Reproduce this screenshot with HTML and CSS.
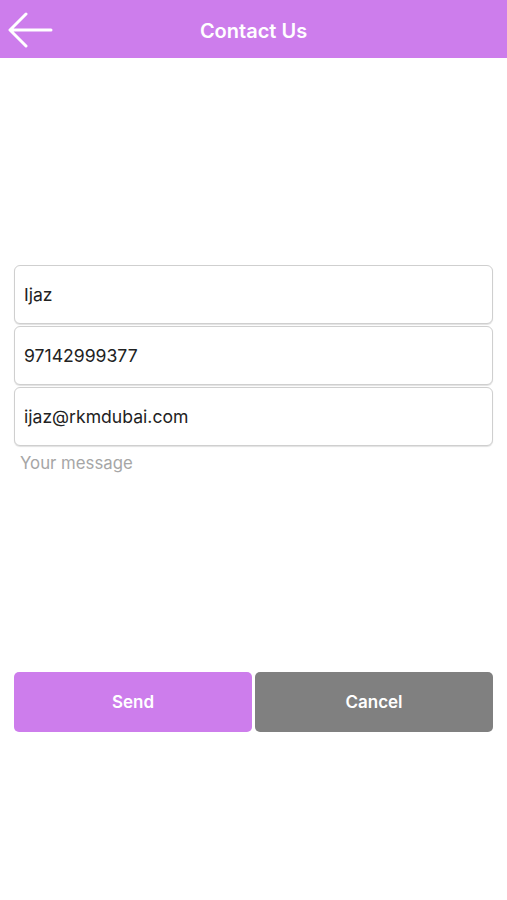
FILE: index.html
```html
<!DOCTYPE html>
<html>
<head>
    <meta charset="UTF-8">
    <title>Contact Us</title>
    <link rel="stylesheet" href="styles.css">
</head>
<body>

<!-- Top bar -->
<div class="topbar">
    <a class="back" href="#">
        <svg width="46" height="36" viewBox="0 0 46 36">
            <path d="M44 18 H4 M19 2 L3 18 L19 34" fill="none" stroke="#fff" stroke-width="3" stroke-linecap="round" stroke-linejoin="round"/>
        </svg>
    </a>
    <h1>Contact Us</h1>
</div>

<!-- Form -->
<form class="contact">
    <input type="text" class="field" value="Ijaz" autocomplete="off">
    <input type="text" class="field" value="97142999377" autocomplete="off">
    <input type="text" class="field" value="ijaz@rkmdubai.com" autocomplete="off">
    <textarea class="message" placeholder="Your message"></textarea>

    <div class="buttons">
        <button type="button" class="btn send">Send</button>
        <button type="button" class="btn cancel">Cancel</button>
    </div>
</form>

</body>
</html>
```

FILE: styles.css
```css
body {margin: 0; background: #fff; font-family: Inter, "Liberation Sans", Arial, sans-serif;}

.topbar {height: 58px; box-sizing: border-box; padding-top: 3px; background: #cd7dec; display: flex; align-items: center; justify-content: center; position: relative;}
.topbar h1 {margin: 0; color: #fff; font-size: 20px; font-weight: 600;}
.back {position: absolute; left: 7px; top: 12px; display: block; line-height: 0;}

.contact {padding: 207px 14px 0; display: flex; flex-direction: column; gap: 2px;}
.field {height: 59px; box-sizing: border-box; border: 1px solid #cfcfcf; border-radius: 6px; box-shadow: 0 1px 1px rgba(0,0,0,0.12); padding: 0 9px; font-family: inherit; font-size: 17.6px; color: #222; background: #fff; outline: none;}
.message {height: 206px; box-sizing: border-box; margin-bottom: 16px; border: none; resize: none; padding: 5px 6px; font-family: inherit; font-size: 16.8px; color: #222; outline: none;}
.message::placeholder {color: #a6a6a6;}

.buttons {display: flex; gap: 3px;}
.btn {flex: 1; height: 60px; border: none; border-radius: 5px; color: #fff; font-family: inherit; font-size: 17px; font-weight: 600; cursor: pointer;}
.send {background: #cd7dec;}
.cancel {background: #808080;}
```
